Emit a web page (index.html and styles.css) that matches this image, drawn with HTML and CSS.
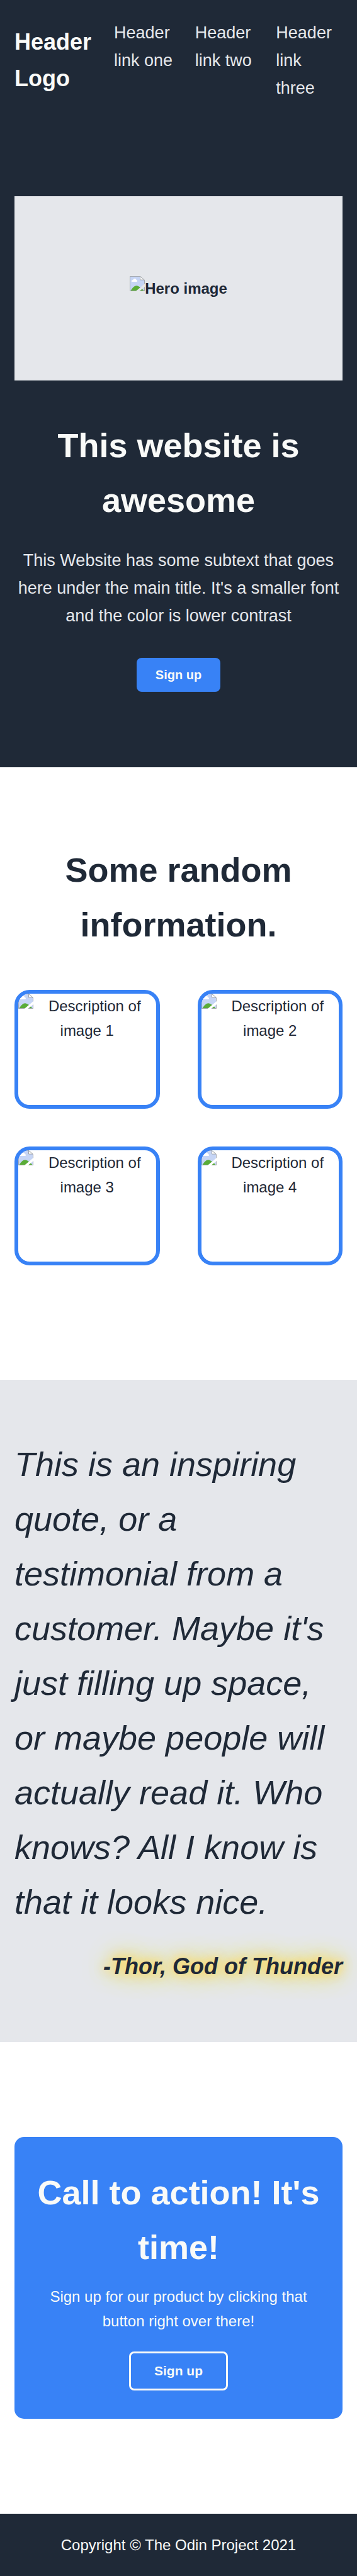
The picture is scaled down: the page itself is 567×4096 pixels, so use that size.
FILE: index.html
```html
<!DOCTYPE html>
<html lang="en">
<head>
<meta charset="utf-8">
<meta name="viewport" content="width=device-width, initial-scale=1">
<title>Landing Page</title>
<link rel="stylesheet" href="styles.css">
</head>
<body>
<svg class="sprite" aria-hidden="true">
  <symbol id="missing" viewBox="0 0 16 16">
    <path d="M.5 .5H11.5L15.5 4.5V15.5H.5Z" fill="#c6d5f5"/>
    <path d="M2 6C1.600 4.700 2.500 4 3.500 4.200C4 2.300 6.500 2.200 7 4C8.200 4.200 8.300 6 7.200 6Z" fill="#fff"/>
    <path d="M1 15.500C3.500 11.500 6 9.200 9 10.600C11.500 11.800 13.800 14 15 15.500Z" fill="#5aac38"/>
    <path d="M.3 15.700V.3H11L15.700 4.500V15.700Z" fill="none" stroke="#8e9296" stroke-width=".5"/>
    <path d="M11 .4V4H15.500Z" fill="#fff" stroke="#8e9296" stroke-width=".5"/>
    <path d="M6.500 16L16 8V11.300L10.300 16Z" class="tear"/>
  </symbol>
</svg>
<div class="top">
  <header class="header">
    <div class="logo">Header Logo</div>
    <nav class="nav">
      <a href="#one">Header link one</a>
      <a href="#two">Header link two</a>
      <a href="#three">Header link three</a>
    </nav>
  </header>
  <section class="hero">
    <div class="hero-image"><div class="hero-alt"><svg class="missing"><use href="#missing"/></svg>Hero image</div></div>
    <h1 class="title hero-title">This website is awesome</h1>
    <p class="hero-text">This Website has some subtext that goes here under the main title. It's a smaller font and the color is lower contrast</p>
    <button class="button" type="button">Sign up</button>
  </section>
</div>
<section class="info">
  <h2 class="title">Some random information.</h2>
  <div class="cards">
    <div class="card"><svg class="missing"><use href="#missing"/></svg>Description of image 1</div>
    <div class="card"><svg class="missing"><use href="#missing"/></svg>Description of image 2</div>
    <div class="card"><svg class="missing"><use href="#missing"/></svg>Description of image 3</div>
    <div class="card"><svg class="missing"><use href="#missing"/></svg>Description of image 4</div>
  </div>
</section>
<section class="testimonial">
  <p class="quote">This is an inspiring quote, or a testimonial from a customer. Maybe it's just filling up space, or maybe people will actually read it. Who knows? All I know is that it looks nice.</p>
  <p class="author">-Thor, God of Thunder</p>
</section>
<section class="action">
  <div class="action-box">
    <h2 class="title">Call to action! It's time!</h2>
    <p class="action-text">Sign up for our product by clicking that button right over there!</p>
    <button class="button button-outline" type="button">Sign up</button>
  </div>
</section>
<footer class="footer">Copyright © The Odin Project 2021</footer>
</body>
</html>
```
FILE: styles.css
```css
* { box-sizing: border-box; margin: 0; padding: 0; }

body {
  font-family: "Liberation Sans", Arial, sans-serif;
  font-size: 24px;
  line-height: 39px;
  color: #1f2937;
  background: #fff;
}

.sprite { position: absolute; width: 0; height: 0; }
.missing { float: left; width: 24px; height: 24px; color: #fff; }
.tear { fill: currentColor; }

.title { font-size: 54px; line-height: 87px; font-weight: 700; text-align: center; }

.top { background: #1f2937; }
.header { display: flex; align-items: center; gap: 36px; padding: 30px 23px; }
.logo { flex: none; width: min-content; font-size: 36px; line-height: 58px; font-weight: 700; color: #f9faf8; }
.nav { display: flex; gap: 23px; font-size: 27px; line-height: 44px; }
.nav a { flex: 1; color: #e5e7eb; text-decoration: none; }

.hero { display: flex; flex-direction: column; align-items: center; padding: 120px 23px; }
.hero-image {
  display: flex;
  align-items: center;
  justify-content: center;
  width: 100%;
  height: 293px;
  background: #e5e7eb;
  font-weight: 700;
}
.hero-image .missing { color: #e5e7eb; }
.hero-title { margin: 60px 0 30px; color: #f9faf8; }
.hero-text { margin-bottom: 45px; font-size: 27px; line-height: 44px; text-align: center; color: #e5e7eb; }

.button {
  padding: 15px 30px;
  border: 0;
  border-radius: 8px;
  background: #3882f6;
  color: #f9faf8;
  font: 700 20px/24px "Liberation Sans", Arial, sans-serif;
}
.button-outline { padding: 16px 37px; border: 3px solid #f9faf8; font-size: 21px; }

.info { padding: 120px 23px 182px; }
.cards { display: grid; grid-template-columns: 1fr 1fr; gap: 60px; margin-top: 60px; }
.card {
  height: 189px;
  overflow: hidden;
  border: 6px solid #3882f6;
  border-radius: 24px;
  text-align: center;
}

.testimonial { padding: 91px 23px; background: #e5e7eb; }
.quote { font-size: 54px; line-height: 87px; font-style: italic; font-weight: 300; }
.author {
  margin-top: 30px;
  font-size: 36px;
  line-height: 58px;
  font-style: italic;
  font-weight: 700;
  text-align: right;
  text-shadow: 0 0 15px #ffdc50, 0 0 23px #ffd070, 0 0 38px #e8e670, 0 0 45px #e8e890;
}

.action { padding: 151px 23px; }
.action-box { padding: 45px 23px; border-radius: 15px; background: #3882f6; color: #f9faf8; text-align: center; }
.action-text { margin: 15px 0 29px; padding: 0 23px; }

.footer { padding: 30px 23px; background: #1f2937; color: #f9faf8; text-align: center; }
```
